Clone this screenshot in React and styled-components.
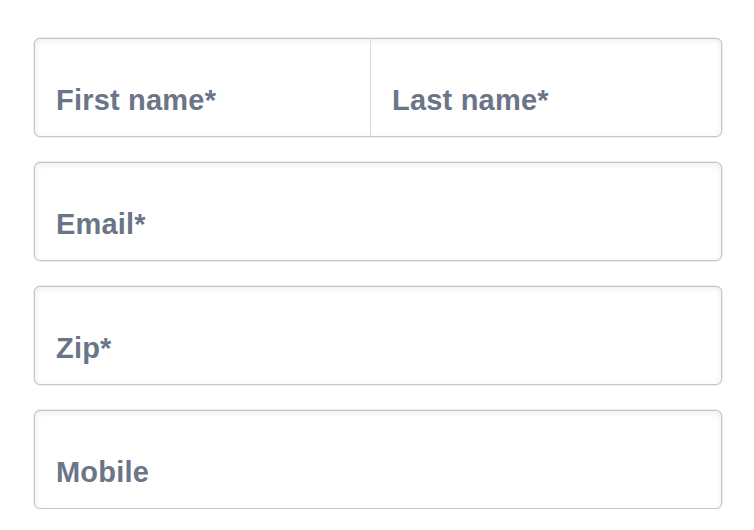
import React from "react";
import styled, { createGlobalStyle } from "styled-components";

const Global = createGlobalStyle`
  html, body { margin: 0; padding: 0; background: #ffffff; }
  body { font-family: "Liberation Sans", Arial, sans-serif; }
`;

const Form = styled.form`
  display: flex;
  flex-direction: column;
  gap: 25px;
  padding: 38px 0 0 34px;
  width: 688px;
`;

const Box = styled.div`
  display: flex;
  height: 99px;
  box-sizing: border-box;
  border: 1px solid #c4c7ce;
  border-radius: 6px;
  background: #ffffff;
  box-shadow: inset 0 2px 6px rgba(30, 40, 70, 0.08), 0 0 0 0.5px rgba(196, 199, 206, 0.6);
  overflow: hidden;
`;

const Field = styled.label`
  display: flex;
  align-items: flex-end;
  box-sizing: border-box;
  flex: ${(p) => (p.$width ? `0 0 ${p.$width}px` : "1 1 auto")};
  padding: 0 20px 20px 21px;
  border-left: ${(p) => (p.$divided ? "1px solid #d6dae4" : "none")};
`;

const Label = styled.span`
  font-family: "Liberation Sans", Arial, sans-serif;
  font-weight: 700;
  font-size: 29px;
  line-height: 32px;
  letter-spacing: 0.2px;
  color: #6b7588;
`;

export default function App() {
  return (
    <>
      <Global />
      <Form>
        <Box>
          <Field $width={335}>
            <Label>First name*</Label>
          </Field>
          <Field $divided>
            <Label>Last name*</Label>
          </Field>
        </Box>
        <Box>
          <Field>
            <Label>Email*</Label>
          </Field>
        </Box>
        <Box>
          <Field>
            <Label>Zip*</Label>
          </Field>
        </Box>
        <Box>
          <Field>
            <Label>Mobile</Label>
          </Field>
        </Box>
      </Form>
    </>
  );
}
